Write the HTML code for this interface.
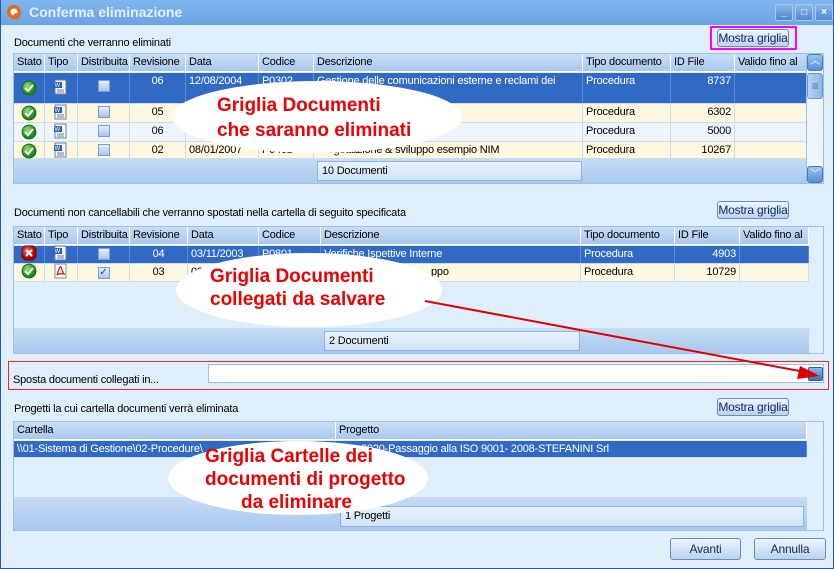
<!DOCTYPE html>
<html><head><meta charset="utf-8">
<style>
*{box-sizing:border-box;margin:0;padding:0}
body{width:834px;height:569px;overflow:hidden;background:#dfeefb;font-family:"Liberation Sans",sans-serif;font-size:11px;color:#000;letter-spacing:-0.2px;position:relative}
.a{position:absolute}
.title{left:0;top:0;width:834px;height:25px;background:linear-gradient(#7fb6ee,#6aa6e4);}
.win{left:0;top:0;width:834px;height:569px;border:1px solid #2b5aa5;border-top:none}
.wb{top:4px;width:18px;height:17px;border:1px solid #a8c8ee;border-radius:2px;background:linear-gradient(#8ab8ea,#4f88cf);color:#fff;font-size:10px;text-align:center;line-height:15px;font-weight:bold}
.grid{background:#dfeefb;border:1px solid #9ebfe6}
.hdr{height:18px;background:linear-gradient(#c8def6,#a9c8ee);border-bottom:1px solid #fff}
.cell{position:absolute;top:0;height:100%;border-right:1px solid #fff;padding:2px 3px;white-space:nowrap;overflow:hidden}
.row{position:absolute;left:0;border-bottom:1px solid #c7dcf5}
.sel{background:#316ac5;color:#fff}
.sel .cell{border-right:1px solid #5b8bd8}
.cr{background:#fff8e1}.bl{background:#eef5fd}
.cr .cell,.bl .cell{border-right:1px solid #c7dcf5}
.foot{background:linear-gradient(#c6dcf5,#a8c8ee)}
.fbox{border:1px solid #8eb3e0;background:linear-gradient(#e8f2fd,#d1e3f8);padding:3px 4px}
.btn{border:1px solid #6a8cbc;border-radius:3px;background:linear-gradient(#eef5fd,#b9d3f0);color:#0e2a5c;text-align:center;font-size:12px;line-height:17px}
.chk{display:inline-block;width:12px;height:12px;border:1px solid #7d9fd0;background:linear-gradient(#e3eefb,#a8c6ee)}
.r{text-align:right}.c{text-align:center}
</style></head><body>
<div class="a title"></div>
<div class="a win"></div>
<svg class="a" style="left:6px;top:4px" width="16" height="16" viewBox="0 0 16 16"><circle cx="8" cy="8" r="7" fill="#e86a1a"/><circle cx="8" cy="8" r="3.5" fill="#fff"/><rect x="9" y="9" width="6" height="4" fill="#e86a1a" transform="rotate(45 10 10)"/></svg>
<div class="a" style="left:29px;top:4px;color:#e6f0fb;font-size:14px;font-weight:bold;letter-spacing:0">Conferma eliminazione</div>
<div class="a wb" style="left:775px">_</div><div class="a wb" style="left:795px">□</div><div class="a wb" style="left:815px">×</div>

<div class="a" style="left:14px;top:37px">Documenti che verranno eliminati</div>
<div class="a" style="left:710px;top:26px;width:87px;height:24px;border:2px solid #ff00ff"></div>
<div class="a btn" style="left:717px;top:29px;width:72px;height:18px">Mostra griglia</div>

<div class="a grid" style="left:13px;top:53px;width:795px;height:131px;overflow:hidden">
 <div class="a hdr" style="left:0;top:0;width:793px">
  <div class="cell" style="left:0;width:31px">Stato</div><div class="cell" style="left:31px;width:33px">Tipo</div><div class="cell" style="left:64px;width:52px">Distribuita</div><div class="cell" style="left:116px;width:56px">Revisione</div><div class="cell" style="left:172px;width:73px">Data</div><div class="cell" style="left:245px;width:55px">Codice</div><div class="cell" style="left:300px;width:269px">Descrizione</div><div class="cell" style="left:569px;width:88px">Tipo documento</div><div class="cell" style="left:657px;width:64px">ID File</div><div class="cell" style="left:721px;width:72px">Valido fino al</div>
 </div>
 <div class="row sel" style="top:19px;width:793px;height:31px">
  <div class="cell" style="left:0;width:31px"></div><div class="cell" style="left:31px;width:33px"></div><div class="cell c" style="left:64px;width:52px;padding-top:7px"><span class="chk"></span></div><div class="cell c" style="left:116px;width:56px">06</div><div class="cell" style="left:172px;width:73px">12/08/2004</div><div class="cell" style="left:245px;width:55px">P0302</div><div class="cell" style="left:300px;width:269px">Gestione delle comunicazioni esterne e reclami dei</div><div class="cell" style="left:569px;width:88px">Procedura</div><div class="cell r" style="left:657px;width:64px">8737</div><div class="cell" style="left:721px;width:72px"></div>
 </div>
 <div class="row cr" style="top:50px;width:793px;height:19px">
  <div class="cell" style="left:0;width:31px"></div><div class="cell" style="left:31px;width:33px"></div><div class="cell c" style="left:64px;width:52px"><span class="chk"></span></div><div class="cell c" style="left:116px;width:56px">05</div><div class="cell" style="left:172px;width:73px"></div><div class="cell" style="left:245px;width:55px"></div><div class="cell" style="left:300px;width:269px;text-align:right;padding-right:180px">tive</div><div class="cell" style="left:569px;width:88px">Procedura</div><div class="cell r" style="left:657px;width:64px">6302</div><div class="cell" style="left:721px;width:72px"></div>
 </div>
 <div class="row bl" style="top:69px;width:793px;height:19px">
  <div class="cell" style="left:0;width:31px"></div><div class="cell" style="left:31px;width:33px"></div><div class="cell c" style="left:64px;width:52px"><span class="chk"></span></div><div class="cell c" style="left:116px;width:56px">06</div><div class="cell" style="left:172px;width:73px"></div><div class="cell" style="left:245px;width:55px"></div><div class="cell" style="left:300px;width:269px;padding-left:100px">mane</div><div class="cell" style="left:569px;width:88px">Procedura</div><div class="cell r" style="left:657px;width:64px">5000</div><div class="cell" style="left:721px;width:72px"></div>
 </div>
 <div class="row cr" style="top:88px;width:793px;height:17px">
  <div class="cell" style="left:0;width:31px"></div><div class="cell" style="left:31px;width:33px"></div><div class="cell c" style="left:64px;width:52px"><span class="chk"></span></div><div class="cell c" style="left:116px;width:56px">02</div><div class="cell" style="left:172px;width:73px">08/01/2007</div><div class="cell" style="left:245px;width:55px">P0402</div><div class="cell" style="left:300px;width:269px">Progettazione &amp; sviluppo esempio NIM</div><div class="cell" style="left:569px;width:88px">Procedura</div><div class="cell r" style="left:657px;width:64px">10267</div><div class="cell" style="left:721px;width:72px"></div>
 </div>
 <div class="a foot" style="left:0;top:105px;width:793px;height:25px"></div>
 <div class="a fbox" style="left:303px;top:107px;width:265px;height:20px">10 Documenti</div>
</div>
<div class="a" style="left:806px;top:53px;width:18px;height:131px;background:#eef5fd;border:1px solid #9ebfe6"></div>
<div class="a btn" style="left:807px;top:54px;width:16px;height:17px;background:linear-gradient(#9cc3ee,#5a8fd6);border-color:#4a78b8;color:#fff;font-size:10px;line-height:14px">︿</div>
<div class="a btn" style="left:807px;top:73px;width:16px;height:26px;background:linear-gradient(90deg,#b6d2f2,#8fb5e6);border-color:#6d96cf;color:#4a6fa8;line-height:24px">≡</div>
<div class="a btn" style="left:807px;top:166px;width:16px;height:17px;background:linear-gradient(#9cc3ee,#5a8fd6);border-color:#4a78b8;color:#fff;font-size:10px;line-height:16px">﹀</div>

<div class="a" style="left:14px;top:207px">Documenti non cancellabili che verranno spostati nella cartella di seguito specificata</div>
<div class="a btn" style="left:717px;top:201px;width:72px;height:18px">Mostra griglia</div>
<div class="a grid" style="left:13px;top:226px;width:811px;height:128px;overflow:hidden">
 <div class="a hdr" style="left:0;top:0;width:795px">
  <div class="cell" style="left:0;width:31px">Stato</div><div class="cell" style="left:31px;width:33px">Tipo</div><div class="cell" style="left:64px;width:52px">Distribuita</div><div class="cell" style="left:116px;width:58px">Revisione</div><div class="cell" style="left:174px;width:71px">Data</div><div class="cell" style="left:245px;width:62px">Codice</div><div class="cell" style="left:307px;width:260px">Descrizione</div><div class="cell" style="left:567px;width:94px">Tipo documento</div><div class="cell" style="left:661px;width:65px">ID File</div><div class="cell" style="left:726px;width:69px">Valido fino al</div>
 </div>
 <div class="row sel" style="top:19px;width:795px;height:18px">
  <div class="cell" style="left:0;width:31px"></div><div class="cell" style="left:31px;width:33px"></div><div class="cell c" style="left:64px;width:52px"><span class="chk"></span></div><div class="cell c" style="left:116px;width:58px">04</div><div class="cell" style="left:174px;width:71px">03/11/2003</div><div class="cell" style="left:245px;width:62px">P0801</div><div class="cell" style="left:307px;width:260px">Verifiche Ispettive Interne</div><div class="cell" style="left:567px;width:94px">Procedura</div><div class="cell r" style="left:661px;width:65px">4903</div><div class="cell" style="left:726px;width:69px"></div>
 </div>
 <div class="row cr" style="top:37px;width:795px;height:18px">
  <div class="cell" style="left:0;width:31px"></div><div class="cell" style="left:31px;width:33px"></div><div class="cell c" style="left:64px;width:52px"><span class="chk" style="color:#1b3f8f;font-size:10px;line-height:10px">✓</span></div><div class="cell c" style="left:116px;width:58px">03</div><div class="cell" style="left:174px;width:71px">02</div><div class="cell" style="left:245px;width:62px"></div><div class="cell" style="left:307px;width:260px;padding-left:110px">ppo</div><div class="cell" style="left:567px;width:94px">Procedura</div><div class="cell r" style="left:661px;width:65px">10729</div><div class="cell" style="left:726px;width:69px"></div>
 </div>
 <div class="a foot" style="left:0;top:101px;width:795px;height:26px"></div>
 <div class="a fbox" style="left:310px;top:104px;width:256px;height:20px">2 Documenti</div>
</div>

<div class="a" style="left:8px;top:361px;width:821px;height:29px;border:1px solid #ff2020"></div>
<div class="a" style="left:13px;top:374px">Sposta documenti collegati in...</div>
<div class="a" style="left:208px;top:364px;width:616px;height:19px;background:#fff;border:1px solid #9ebfe6"></div>
<div class="a" style="left:808px;top:367px;width:15px;height:14px;border-radius:2px;background:linear-gradient(#8fb8ea,#3d6fbf);border:1px solid #345f9f;color:#fff;font-size:9px;line-height:8px;text-align:center">...</div>

<div class="a" style="left:14px;top:403px">Progetti la cui cartella documenti verrà eliminata</div>
<div class="a btn" style="left:717px;top:398px;width:72px;height:18px">Mostra griglia</div>
<div class="a grid" style="left:13px;top:421px;width:811px;height:110px;overflow:hidden">
 <div class="a hdr" style="left:0;top:0;width:793px">
  <div class="cell" style="left:0;width:322px">Cartella</div><div class="cell" style="left:322px;width:471px">Progetto</div>
 </div>
 <div class="row sel" style="top:19px;width:793px;height:17px">
  <div class="cell" style="left:0;width:322px">\\01-Sistema di Gestione\02-Procedure\</div><div class="cell" style="left:322px;width:471px;padding-left:25px">2020-Passaggio alla ISO 9001- 2008-STEFANINI Srl</div>
 </div>
 <div class="a foot" style="left:0;top:75px;width:793px;height:34px"></div>
 <div class="a fbox" style="left:326px;top:84px;width:464px;height:21px">1 Progetti</div>
</div>

<div class="a btn" style="left:670px;top:538px;width:71px;height:22px;line-height:20px">Avanti</div>
<div class="a btn" style="left:754px;top:538px;width:72px;height:22px;line-height:20px">Annulla</div>

<svg class="a" style="left:0;top:0" width="834" height="569">
<defs>
<radialGradient id="g" cx="40%" cy="35%"><stop offset="0" stop-color="#9be27a"/><stop offset="1" stop-color="#1d8a1d"/></radialGradient>
<radialGradient id="rd" cx="40%" cy="35%"><stop offset="0" stop-color="#ff7a7a"/><stop offset="1" stop-color="#b00000"/></radialGradient>
<g id="ok"><circle cx="0" cy="0" r="7" fill="url(#g)" stroke="#0d5e0d" stroke-width=".8"/><path d="M-4 0 L-1 3 L4 -3" stroke="#fff" stroke-width="2" fill="none"/></g>
<g id="w"><rect x="-5" y="-7" width="11" height="14" fill="#f4f7fc" stroke="#6a7fa8"/><rect x="-6" y="-5" width="8" height="6" fill="#2b5bb8"/><text x="-5.5" y="0" font-size="6" fill="#fff" font-family="Liberation Sans">W</text><path d="M-3 3h7M-3 5h7" stroke="#6a7fa8"/></g>
</defs>
<use href="#ok" x="29" y="88"/><use href="#ok" x="29" y="113"/><use href="#ok" x="29" y="132"/><use href="#ok" x="29" y="151"/>
<use href="#w" x="60" y="87"/><use href="#w" x="60" y="112"/><use href="#w" x="60" y="131"/><use href="#w" x="60" y="150"/>
<g transform="translate(29,253)"><path d="M-4-7h8l3 3v8l-3 3h-8l-3-3v-8z" fill="url(#rd)" stroke="#700"/><path d="M-3-3l6 6M3-3l-6 6" stroke="#fff" stroke-width="2"/></g>
<use href="#ok" x="29" y="271"/>
<use href="#w" x="60" y="253"/>
<g transform="translate(60,271)"><rect x="-5" y="-7" width="11" height="14" fill="#fff" stroke="#888"/><path d="M-3 4 Q0-6 1-4 Q2 0 4 3 Q-1 2-3 4" stroke="#e02020" fill="none" stroke-width="1.3"/></g>
<ellipse cx="317" cy="117" rx="145" ry="36" fill="#fff"/>
<ellipse cx="309" cy="290" rx="133" ry="37" fill="#fff"/>
<ellipse cx="298" cy="478" rx="130" ry="37" fill="#fff"/>
<line x1="425" y1="301" x2="805" y2="372" stroke="#e00000" stroke-width="2"/>
<polygon points="820,376 800,366 797,379" fill="#e00000"/>
<g font-family="Liberation Sans" font-weight="bold" fill="#f00000" font-size="19" letter-spacing="0">
<text x="217" y="111">Griglia Documenti</text>
<text x="217" y="136">che saranno eliminati</text>
<text x="210" y="282">Griglia Documenti</text>
<text x="210" y="305">collegati da salvare</text>
<text x="205" y="462">Griglia Cartelle dei</text>
<text x="205" y="485">documenti di progetto</text>
<text x="241" y="508">da eliminare</text>
</g>
</svg>
</body></html>
